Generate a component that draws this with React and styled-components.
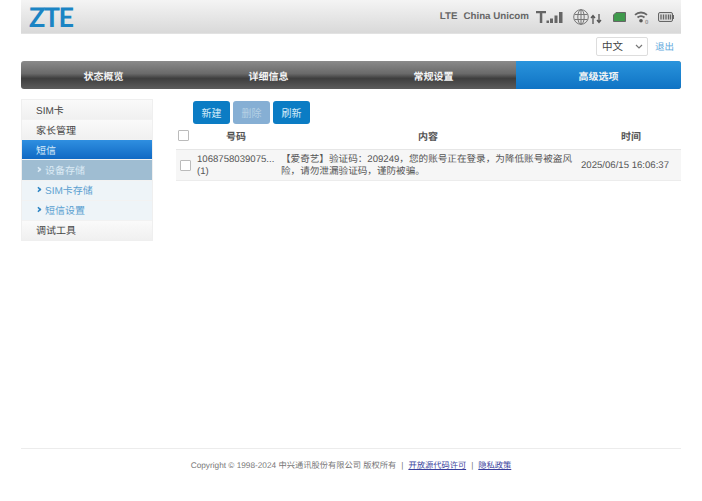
import React from "react";
import styled, { createGlobalStyle } from "styled-components";

const GlobalStyle = createGlobalStyle`
  html, body {
    margin: 0;
    padding: 0;
    background: #fff;
    font-family: "Liberation Sans", "Noto Sans CJK SC", sans-serif;
    font-size: 10px;
    color: #444;
    text-rendering: geometricPrecision;
  }
`;

const Page = styled.div`
  width: 660px;
  height: 501px;
  margin-left: 21px;
  display: flex;
  flex-direction: column;
`;

const Header = styled.header`
  height: 34px;
  display: flex;
  align-items: center;
  justify-content: space-between;
  padding: 0 7px 0 8px;
  background: linear-gradient(#f4f4f4, #d9d9d9);
  border-bottom: 1px solid #e2e2e2;
  box-sizing: border-box;
`;

const Logo = styled.span`
  font-family: "Lato", sans-serif;
  font-size: 27px;
  font-weight: bold;
  line-height: 32px;
  letter-spacing: -1.5px;
  color: #1b84c4;
`;

const StatusBar = styled.div`
  display: flex;
  align-items: center;
  font-size: 9.75px;
  font-weight: bold;
  color: #666;
`;

const StatusLabel = styled.span`
  margin-right: ${(p) => p.$gap}px;
`;

const StatusIcon = styled.svg`
  display: block;
  margin-right: ${(p) => p.$gap || 0}px;
`;

const LangRow = styled.div`
  height: 27px;
  display: flex;
  align-items: center;
  justify-content: flex-end;
  padding: 0 7px 3px 0;
  box-sizing: border-box;
`;

const LangSelect = styled.select`
  width: 52px;
  height: 19px;
  padding: 0 0 0 5px;
  appearance: none;
  background: #fff url("data:image/svg+xml,%3Csvg xmlns='http://www.w3.org/2000/svg' width='8' height='5'%3E%3Cpath d='M1 1l3 3 3-3' fill='none' stroke='%23777' stroke-width='1.200'/%3E%3C/svg%3E") no-repeat right 4px center;
  border: 1px solid #ddd;
  border-radius: 2px;
  font-family: inherit;
  font-size: 10.5px;
  color: #444;
`;

const LogoutLink = styled.a`
  margin-left: 7px;
  font-size: 9.5px;
  color: #62a9dc;
`;

const Nav = styled.nav`
  height: 28px;
  display: grid;
  grid-template-columns: repeat(4, 1fr);
  border-radius: 3px;
  overflow: hidden;
  background: linear-gradient(#8a8a8a 0%, #6a6a6a 45%, #3e3e3e 62%, #5c5c5c 100%);
`;

const NavItem = styled.div`
  display: flex;
  align-items: center;
  justify-content: center;
  font-size: 10px;
  font-weight: bold;
  color: #f4f4f4;
  background: ${(p) => (p.$active ? "linear-gradient(#2a94dc, #0f73c4)" : "none")};
`;

const Body = styled.div`
  flex: 1;
  display: flex;
  padding-top: 10px;
`;

const Sidebar = styled.aside`
  width: 132px;
  height: 142px;
  flex: none;
  display: flex;
  flex-direction: column;
  border: 1px solid #efefef;
  box-sizing: border-box;
`;

const sideBackgrounds = {
  main: "linear-gradient(#fafafa, #f0f0f0)",
  open: "linear-gradient(#2f8fe0, #1069c4)",
  current: "#9fbdd2",
  sub: "#eef4f8",
};

const sideColors = {
  main: "#444",
  open: "#d8ecfa",
  current: "#dcebf5",
  sub: "#5a9fd0",
};

const SideRow = styled.div`
  flex: 1;
  display: flex;
  align-items: center;
  padding: 0 0 1px 14px;
  font-size: 10px;
  color: ${(p) => sideColors[p.$kind]};
  background: ${(p) => sideBackgrounds[p.$kind]};
  border-bottom: 1px solid #f2f2f2;
  &:last-child {
    border-bottom: 0;
  }
`;

const Chevron = styled.span`
  width: 3px;
  height: 3px;
  margin-right: 4px;
  border-top: 2px solid ${(p) => (p.$light ? "#dcebf5" : "#2f86c4")};
  border-right: 2px solid ${(p) => (p.$light ? "#dcebf5" : "#2f86c4")};
  transform: rotate(45deg) scale(0.8);
`;

const Main = styled.main`
  flex: 1;
  margin-left: 23px;
  min-width: 0;
`;

const Toolbar = styled.div`
  display: flex;
  gap: 3px;
  padding: 2px 0 0 17px;
`;

const Button = styled.button`
  width: 37px;
  height: 23px;
  padding: 0;
  border: 0;
  border-radius: 3px;
  font-family: inherit;
  font-size: 10px;
  color: ${(p) => (p.disabled ? "#b5cfe4" : "#d5ecfa")};
  background: ${(p) => (p.disabled ? "#86afd4" : "#0b7cc4")};
`;

const Row = styled.div`
  display: grid;
  grid-template-columns: 21px 78px 306px 1fr;
  align-items: center;
`;

const HeadRow = styled(Row)`
  height: 26px;
  padding-bottom: 2px;
  font-weight: bold;
  text-align: center;
  color: #555;
  border-bottom: 1px solid #e6e6e6;
  box-sizing: border-box;
`;

const MessageRow = styled(Row)`
  height: 31px;
  padding-top: 1px;
  background: #f6f6f6;
  border-bottom: 1px solid #ececec;
  box-sizing: border-box;
  font-size: 9.6px;
  color: #555;
  line-height: 12px;
`;

const Check = styled.span`
  display: block;
  width: 9px;
  height: 9px;
  margin-left: ${(p) => p.$indent}px;
  border: 1px solid #bbb;
  border-radius: 1px;
  background: #fff;
`;

const Sender = styled.div`
  white-space: nowrap;
`;

const Content = styled.div`
  padding-left: 6px;
  width: 296px;
`;

const Time = styled.div`
  white-space: nowrap;
`;

const Footer = styled.footer`
  height: 53px;
  border-top: 1px solid #ececec;
  padding-top: 11px;
  box-sizing: border-box;
  flex: none;
  text-align: center;
  font-size: 8.25px;
  line-height: 12px;
  color: #777;
`;

const FooterLink = styled.a`
  color: #3a3f9c;
  text-decoration: underline;
`;

const Divider = styled.span`
  margin: 0 5px;
`;

const SignalIcon = () => (
  <StatusIcon width="28" height="14" viewBox="0 0 28 14" $gap={9}>
    <path d="M0 1h10v2.200H6.300V13H3.800V3.200H0z" fill="#666" />
    <rect x="10.500" y="10.500" width="2.500" height="2.500" fill="#666" />
    <rect x="14" y="8.500" width="3" height="4.500" fill="#666" />
    <rect x="18.500" y="5.500" width="3" height="7.500" fill="#666" />
    <rect x="23" y="2" width="3.500" height="11" fill="#666" />
  </StatusIcon>
);

const GlobeIcon = () => (
  <StatusIcon width="29" height="16" viewBox="0 0 29 16" $gap={11}>
    <g fill="none" stroke="#777" strokeWidth="1">
      <circle cx="8" cy="8" r="7.300" />
      <ellipse cx="8" cy="8" rx="3.200" ry="7.300" />
      <path d="M8 1v14M1.500 5.500h13M1.500 10.500h13" />
    </g>
    <path d="M20 15V7M18 9l2-2.500L22 9M26 5v8M24 11l2 2.500 2-2.500" fill="none" stroke="#555" strokeWidth="1.300" />
  </StatusIcon>
);

const SimIcon = () => (
  <StatusIcon width="13" height="10" viewBox="0 0 13 10" $gap={8}>
    <path d="M3 .500h9.500v9H.500V3z" fill="#3f9a4c" stroke="#666" strokeWidth="1" />
  </StatusIcon>
);

const WifiIcon = () => (
  <StatusIcon width="16" height="14" viewBox="0 0 16 14" $gap={8}>
    <g fill="none" stroke="#666" strokeWidth="1.800">
      <path d="M1 4.800a9 9 0 0 1 12 0" />
      <path d="M3.500 7.500a5.500 5.500 0 0 1 7 0" />
    </g>
    <circle cx="7" cy="10.800" r="1.800" fill="#555" />
    <text x="11" y="13.500" fontSize="6" fill="#999" fontFamily="Liberation Sans">0</text>
  </StatusIcon>
);

const BatteryIcon = () => (
  <StatusIcon width="16" height="10" viewBox="0 0 16 10">
    <rect x=".500" y=".500" width="14" height="9" rx="1.500" fill="#d8d8d8" stroke="#666" />
    <rect x="15" y="3" width="1" height="4" fill="#666" />
    <path d="M3 2.500v5M5.500 2.500v5M8 2.500v5M10.500 2.500v5M12.500 2.500v5" stroke="#666" strokeWidth="1.300" />
  </StatusIcon>
);

const App = () => (
  <>
    <GlobalStyle />
    <Page>
      <Header>
        <Logo>ZTE</Logo>
        <StatusBar>
          <StatusLabel $gap={6}>LTE</StatusLabel>
          <StatusLabel $gap={7}>China Unicom</StatusLabel>
          <SignalIcon />
          <GlobeIcon />
          <SimIcon />
          <WifiIcon />
          <BatteryIcon />
        </StatusBar>
      </Header>
      <LangRow>
        <LangSelect defaultValue="zh">
          <option value="zh">中文</option>
          <option value="en">English</option>
        </LangSelect>
        <LogoutLink>退出</LogoutLink>
      </LangRow>
      <Nav>
        <NavItem>状态概览</NavItem>
        <NavItem>详细信息</NavItem>
        <NavItem>常规设置</NavItem>
        <NavItem $active>高级选项</NavItem>
      </Nav>
      <Body>
        <Sidebar>
          <SideRow $kind="main">SIM卡</SideRow>
          <SideRow $kind="main">家长管理</SideRow>
          <SideRow $kind="open">短信</SideRow>
          <SideRow $kind="current"><Chevron $light />设备存储</SideRow>
          <SideRow $kind="sub"><Chevron />SIM卡存储</SideRow>
          <SideRow $kind="sub"><Chevron />短信设置</SideRow>
          <SideRow $kind="main">调试工具</SideRow>
        </Sidebar>
        <Main>
          <Toolbar>
            <Button>新建</Button>
            <Button disabled>删除</Button>
            <Button>刷新</Button>
          </Toolbar>
          <HeadRow>
            <Check $indent={2} />
            <div>号码</div>
            <div>内容</div>
            <div>时间</div>
          </HeadRow>
          <MessageRow>
            <Check $indent={4} />
            <Sender>1068758039075...<br />(1)</Sender>
            <Content>【爱奇艺】验证码：209249，您的账号正在登录，为降低账号被盗风险，请勿泄漏验证码，谨防被骗。</Content>
            <Time>2025/06/15 16:06:37</Time>
          </MessageRow>
        </Main>
      </Body>
      <Footer>
        Copyright © 1998-2024 中兴通讯股份有限公司 版权所有
        <Divider>|</Divider>
        <FooterLink>开放源代码许可</FooterLink>
        <Divider>|</Divider>
        <FooterLink>隐私政策</FooterLink>
      </Footer>
    </Page>
  </>
);

export default App;
